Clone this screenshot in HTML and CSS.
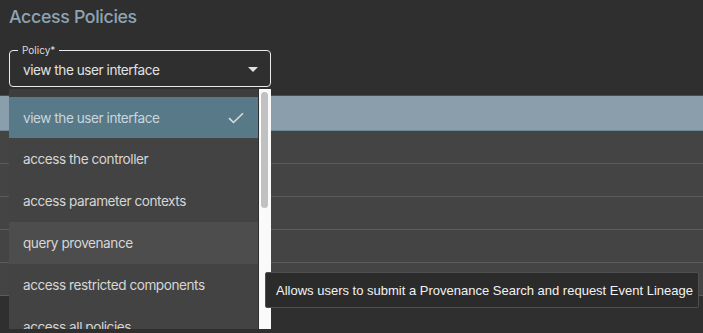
FILE: index.html
```html
<!DOCTYPE html>
<html lang="en">
<head>
<meta charset="utf-8">
<title>Access Policies</title>
<link rel="stylesheet" href="styles.css">
</head>
<body>
<div class="page">
  <h1 class="title">Access Policies</h1>
  <div class="field">
    <span class="field-label">Policy*</span>
    <span class="field-value">view the user interface</span>
    <svg class="field-arrow" width="10" height="5" viewBox="0 0 10 5"><path d="M0 0 L10 0 L5 5 Z" fill="#e0e0e0"/></svg>
  </div>
  <div class="table">
    <div class="row row-selected"></div>
    <div class="row"></div>
    <div class="row"></div>
    <div class="row"></div>
    <div class="row"></div>
    <div class="row"></div>
  </div>

  <div class="panel">
    <div class="options">
      <div class="option option-selected">
        <span>view the user interface</span>
        <svg class="check" width="16" height="12" viewBox="0 0 16 12"><path d="M1 6.2 L5.5 10.5 L15 1.2" fill="none" stroke="#dcdcdc" stroke-width="1.6"/></svg>
      </div>
      <div class="option">access the controller</div>
      <div class="option">access parameter contexts</div>
      <div class="option option-hover">query provenance</div>
      <div class="option">access restricted components</div>
      <div class="option">access all policies</div>
    </div>
    <div class="scrollbar"><div class="thumb"></div></div>
  </div>

  <div class="tooltip">Allows users to submit a Provenance Search and request Event Lineage</div>
</div>
</body>
</html>
```
FILE: styles.css
```css
html, body {
  margin: 0;
  padding: 0;
  background: #2f2f2f;
  width: 703px;
  height: 333px;
  overflow: hidden;
  font-family: Inter, "Noto Sans", sans-serif;
}

.page {
  position: relative;
  height: 333px;
}

.title {
  margin: 0;
  padding: 5px 0 0 9px;
  font-size: 17.8px;
  font-weight: 500;
  letter-spacing: -0.35px;
  line-height: 24px;
  color: #8ea4b3;
}

.field {
  position: relative;
  margin: 21px 0 0 9px;
  height: 35px;
  border: 1.5px solid #e8ecef;
  border-radius: 4px;
  display: flex;
  align-items: center;
  padding: 0 12px 0 13px;
  box-sizing: content-box;
  width: 235px;
}

.field-label {
  position: absolute;
  left: 8px;
  top: -8px;
  padding: 0 4px;
  background: #2f2f2f;
  font-size: 10px;
  line-height: 14px;
  color: #dcdcdc;
}

.field-value {
  flex: 1;
  font-size: 13.6px;
  letter-spacing: -0.45px;
  color: #e2e2e2;
  padding-top: 2px;
}

.field-arrow {
  margin-top: 2px;
}

.table {
  margin-top: 8px;
  border-top: 1px solid #4c4c4c;
}

.row {
  height: 32px;
  background: #444444;
  border-bottom: 1px solid #5c5c5c;
}

.row-selected {
  height: 34px;
  background: #8a9fab;
  border-bottom: 1px solid #6f8896;
}

.panel {
  position: absolute;
  left: 9px;
  top: 89px;
  width: 262px;
  height: 240px;
  display: flex;
  background: #3e3e3e;
  overflow: hidden;
}

.options {
  width: 249px;
  padding-top: 8px;
  display: flex;
  flex-direction: column;
}

.option {
  flex: none;
  height: 42px;
  display: flex;
  align-items: center;
  justify-content: space-between;
  padding: 0 14px;
  background: #434343;
  font-size: 13.6px;
  letter-spacing: -0.45px;
  color: #d6d6d6;
}

.option-selected {
  height: 41px;
  background: #577988;
  color: #c9d6dd;
}

.option-hover {
  background: #4d4d4d;
}

.scrollbar {
  width: 13px;
  background: #fafafa;
  border-left: 1px solid #2f2f2f;
  padding-top: 3px;
  box-sizing: border-box;
}

.thumb {
  margin-left: 2px;
  width: 7px;
  height: 116px;
  border-radius: 4px;
  background: #c1c1c1;
}

.tooltip {
  position: absolute;
  left: 265px;
  top: 272px;
  width: 434px;
  height: 36px;
  box-sizing: border-box;
  border: 1px solid #505050;
  border-radius: 2px;
  background: #2b2b2b;
  color: #f2f2f2;
  font-family: "Liberation Sans", Arial, sans-serif;
  font-size: 13px;
  display: flex;
  align-items: center;
  padding-left: 10px;
  white-space: nowrap;
}
```
